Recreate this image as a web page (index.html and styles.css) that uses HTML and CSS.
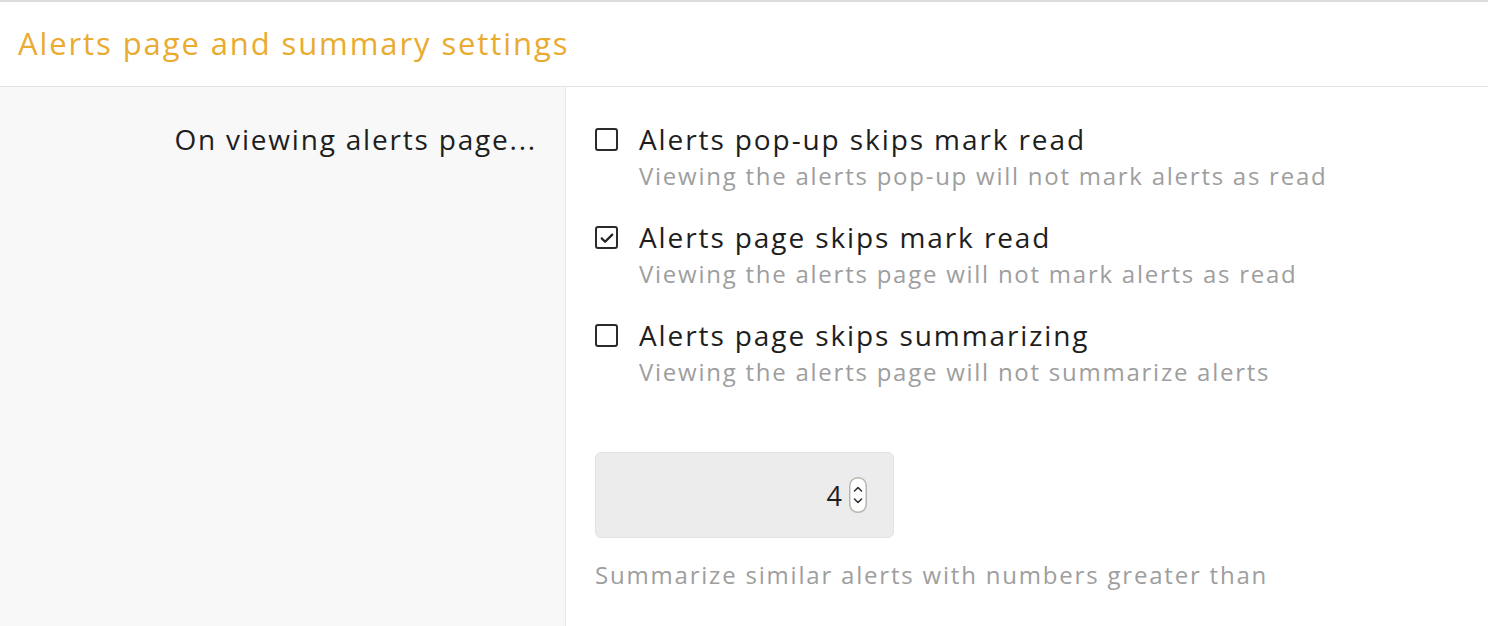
FILE: index.html
```html
<!DOCTYPE html>
<html lang="en">

<head>
  <meta charset="UTF-8">
  <meta name="viewport" content="width=device-width, initial-scale=1.0">
  <title>Alerts page and summary settings</title>
  <link rel="stylesheet" href="styles.css">
</head>

<body>
  <section class="panel">
    <h2 class="panel-title">Alerts page and summary settings</h2>
    <div class="panel-body">
      <div class="side">
        <p class="side-label">On viewing alerts page...</p>
      </div>
      <div class="options">
        <label class="option">
          <span class="box"></span>
          <span class="option-text">
            <span class="option-title">Alerts pop-up skips mark read</span>
            <span class="option-hint">Viewing the alerts pop-up will not mark alerts as read</span>
          </span>
        </label>
        <label class="option">
          <span class="box checked">
            <svg viewBox="0 0 24 24" width="18" height="18"><path d="M5 12.5l4.5 4.5L19 7.5" fill="none" stroke="#222" stroke-width="3" stroke-linecap="round" stroke-linejoin="round"/></svg>
          </span>
          <span class="option-text">
            <span class="option-title">Alerts page skips mark read</span>
            <span class="option-hint">Viewing the alerts page will not mark alerts as read</span>
          </span>
        </label>
        <label class="option">
          <span class="box"></span>
          <span class="option-text">
            <span class="option-title">Alerts page skips summarizing</span>
            <span class="option-hint">Viewing the alerts page will not summarize alerts</span>
          </span>
        </label>

        <div class="number-input">
          <span class="number-value">4</span>
          <span class="spinner">
            <svg viewBox="0 0 18 36" width="18" height="36">
              <rect x="0.75" y="0.75" width="16.5" height="34.5" rx="8" fill="#fff" stroke="#b9b4ad" stroke-width="1.5"/>
              <path d="M5.5 14l3.5-3.5 3.5 3.5" fill="none" stroke="#333" stroke-width="1.6" stroke-linecap="round" stroke-linejoin="round"/>
              <path d="M5.5 22l3.5 3.5 3.5-3.5" fill="none" stroke="#333" stroke-width="1.6" stroke-linecap="round" stroke-linejoin="round"/>
            </svg>
          </span>
        </div>
        <p class="number-hint">Summarize similar alerts with numbers greater than</p>
      </div>
    </div>
  </section>
</body>

</html>
```

FILE: styles.css
```css
html {
  box-sizing: border-box;
  font-family: 'Open Sans', sans-serif;
  font-size: 16px;
}

*,
*:after,
*:before {
  box-sizing: inherit;
}

body {
  margin: 0;
  background-color: #fff;
  color: #222;
}

.panel {
  border-top: 2px solid #dcdcdc;
}

.panel-title {
  margin: 0;
  height: 85px;
  padding: 0 18px 3px;
  display: flex;
  align-items: center;
  font-size: 31px;
  font-weight: 400;
  letter-spacing: 1.9px;
  color: #e9ab30;
  border-bottom: 1px solid #e3e3e3;
}

.panel-body {
  display: grid;
  grid-template-columns: 566px 1fr;
  min-height: 540px;
}

.side {
  background-color: #f8f8f8;
  border-right: 1px solid #e6e6e6;
  padding: 33px 28px 0 0;
  text-align: right;
}

.side-label {
  margin: 0;
  font-size: 28px;
  line-height: 38px;
  letter-spacing: 1.8px;
  color: #1e1e1e;
}

.options {
  padding: 33px 0 0 29px;
}

.option {
  display: flex;
  gap: 21px;
  margin-bottom: 24px;
}

.box {
  flex: none;
  width: 23px;
  height: 23px;
  margin-top: 8px;
  border: 2px solid #2b2b2b;
  border-radius: 3px;
  display: flex;
  align-items: center;
  justify-content: center;
}

.option-text {
  display: flex;
  flex-direction: column;
}

.option-title {
  font-size: 28px;
  line-height: 38px;
  letter-spacing: 1.9px;
  color: #1e1e1e;
}

.option-hint {
  font-size: 24px;
  line-height: 36px;
  letter-spacing: 1.75px;
  color: #9e9e9e;
}

.number-input {
  margin-top: 62px;
  width: 299px;
  height: 86px;
  background-color: #ececec;
  border: 1px solid #e2e2e2;
  border-radius: 6px;
  display: flex;
  align-items: center;
  justify-content: flex-end;
  gap: 7px;
  padding-right: 26px;
}

.number-value {
  font-size: 27px;
  color: #1e1e1e;
}

.spinner {
  display: flex;
}

.number-hint {
  margin: 19px 0 0;
  font-size: 24px;
  line-height: 36px;
  letter-spacing: 1.8px;
  color: #9e9e9e;
}
```
